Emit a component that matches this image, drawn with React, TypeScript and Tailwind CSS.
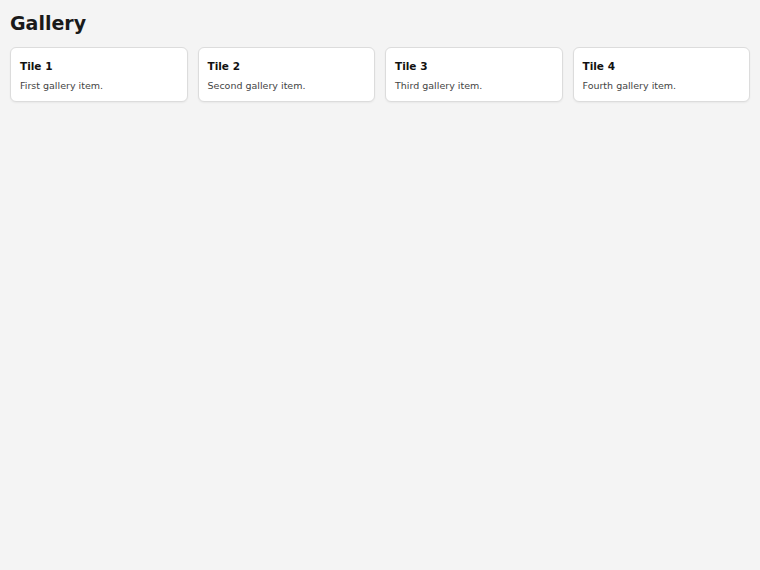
const tiles = [
  { title: "Tile 1", text: "First gallery item." },
  { title: "Tile 2", text: "Second gallery item." },
  { title: "Tile 3", text: "Third gallery item." },
  { title: "Tile 4", text: "Fourth gallery item." },
];

export default function App() {
  return (
    <div className="min-h-[100dvh] bg-[#f4f4f4] p-[10px] font-['DejaVu_Sans',sans-serif]">
      <h1 className="text-[19px] font-bold leading-[26px] text-[#1a1a1a]">Gallery</h1>
      <div className="mt-[11px] grid grid-cols-4 gap-[10px]">
        {tiles.map((tile) => (
          <div key={tile.title} className="rounded-[6px] border border-[#dcdcdc] bg-white px-[9px] pt-[10px] pb-[8px] shadow-[0_1px_2px_rgba(0,0,0,0.05)]">
            <div className="text-[10.5px] font-bold leading-[16px] text-[#111]">{tile.title}</div>
            <div className="mt-[5px] text-[9.5px] leading-[14px] text-[#444]">{tile.text}</div>
          </div>
        ))}
      </div>
    </div>
  );
}
